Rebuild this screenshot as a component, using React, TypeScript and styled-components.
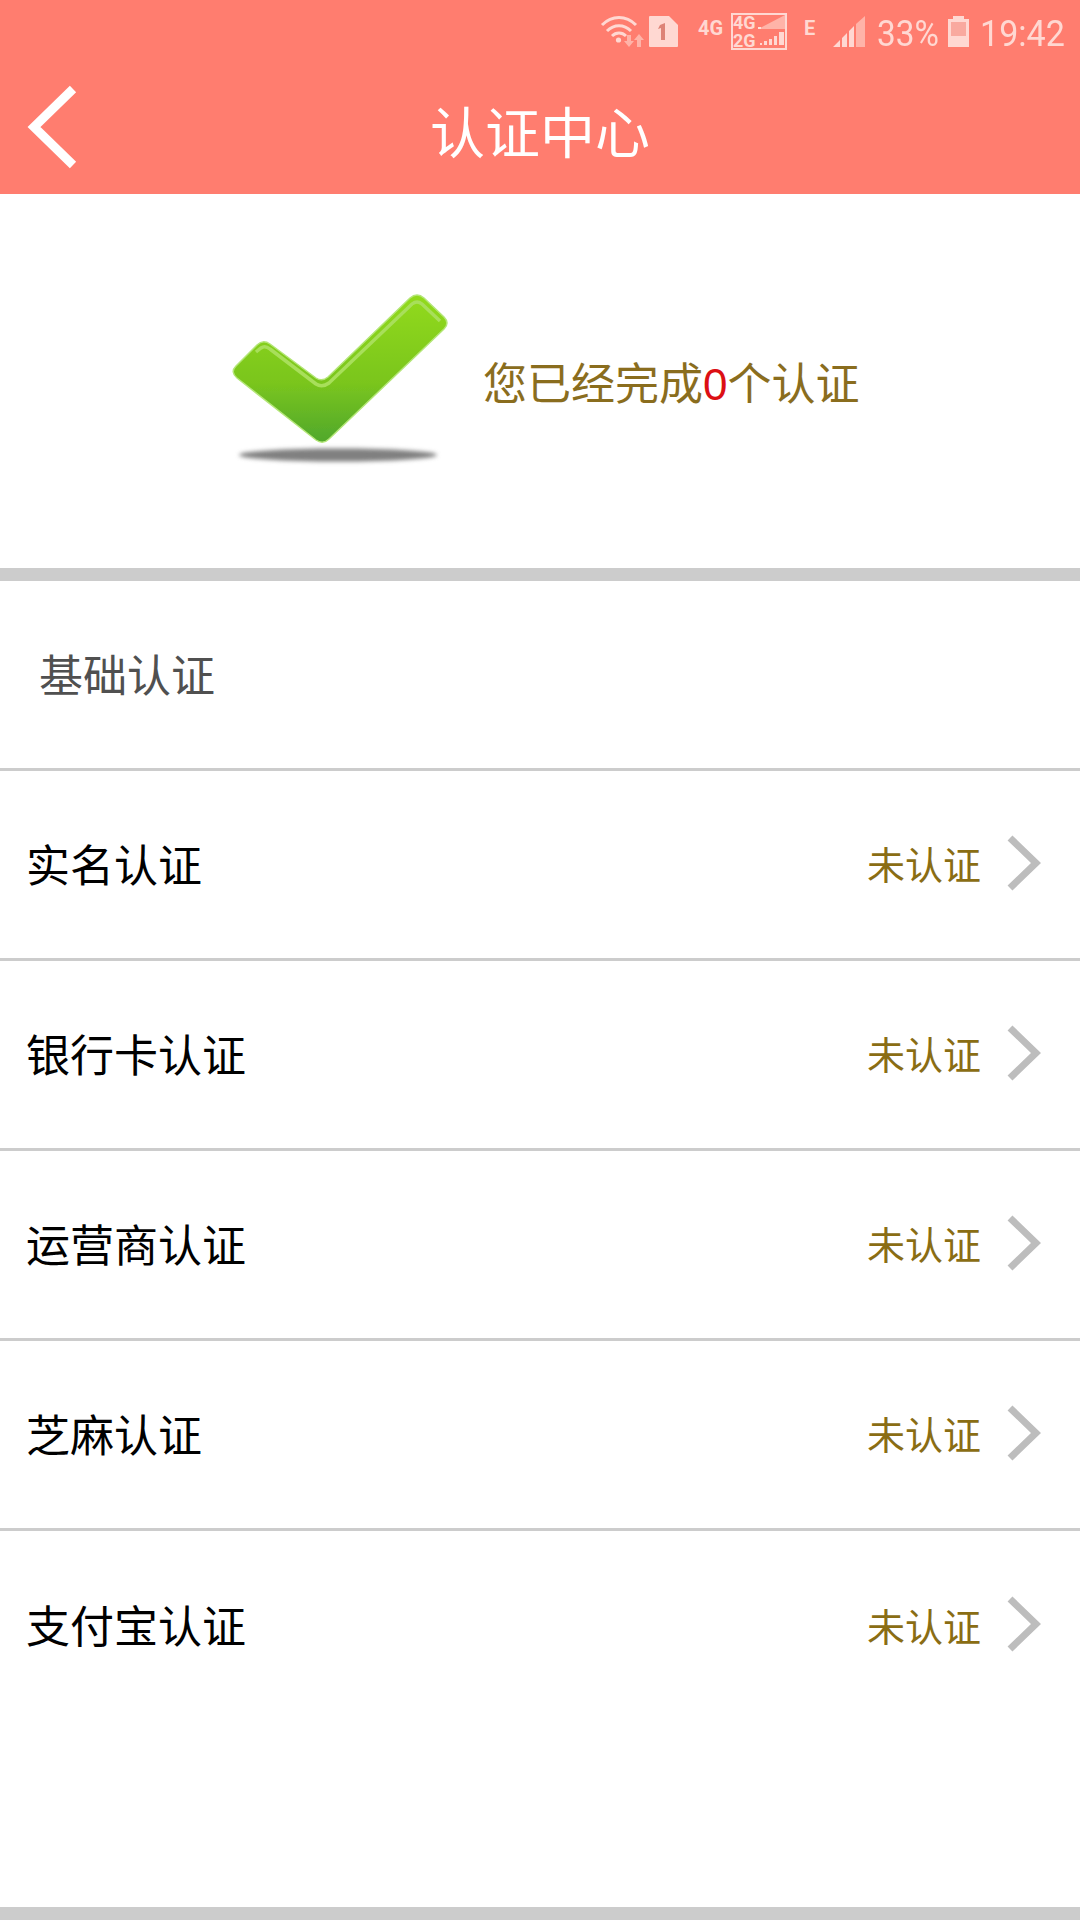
import styled, { createGlobalStyle } from "styled-components"

const GlobalStyle = createGlobalStyle`
  html, body {
    margin: 0;
    padding: 0;
    background: #ffffff;
  }
  * {
    box-sizing: border-box;
  }
`

const Page = styled.div`
  width: 1080px;
  height: 1920px;
  display: flex;
  flex-direction: column;
  background: #ffffff;
  font-family: "Noto Sans CJK SC", "Roboto", sans-serif;
  overflow: hidden;
`

const Header = styled.header`
  height: 194px;
  flex: none;
  background: #ff7d6f;
  display: flex;
  flex-direction: column;
`

const StatusBar = styled.div`
  height: 66px;
  display: flex;
  align-items: center;
  padding: 0 0 3px 600px;
  color: #ffd8d2;
`

const StatusIcon = styled.svg<{ $ml?: number }>`
  display: block;
  flex: none;
  margin-left: ${(p) => p.$ml ?? 0}px;
`

const StatusBadge = styled.span<{ $ml: number; $w: number }>`
  flex: none;
  width: ${(p) => p.$w}px;
  margin: 0 0 7px ${(p) => p.$ml}px;
  font-family: "Roboto", sans-serif;
  font-size: 20px;
  font-weight: 700;
  line-height: 20px;
`

const StatusText = styled.span<{ $ml: number; $w: number; $scale: number }>`
  flex: none;
  width: ${(p) => p.$w}px;
  margin: 5px 0 0 ${(p) => p.$ml}px;
  font-family: "Roboto", sans-serif;
  font-size: 37px;
  line-height: 44px;
  white-space: nowrap;
  transform: scaleX(${(p) => p.$scale});
  transform-origin: left center;
`

const TitleBar = styled.div`
  flex: 1;
  position: relative;
  display: flex;
  align-items: center;
  justify-content: center;
  padding-bottom: 2px;
`

const BackIcon = styled.svg`
  position: absolute;
  left: 27px;
  top: 18px;
`

const Title = styled.h1`
  margin: 0;
  font-size: 55px;
  font-weight: 400;
  line-height: 70px;
  color: #ffffff;
`

const Summary = styled.section`
  height: 374px;
  flex: none;
  display: flex;
  align-items: center;
  padding-left: 228px;
`

const CheckSvg = styled.svg`
  flex: none;
  display: block;
`

const SummaryText = styled.p`
  margin: 3px 0 0 31px;
  font-size: 44px;
  line-height: 60px;
  color: #8a6d1e;
`

const Count = styled.span`
  color: #dc0f14;
  font-family: "Liberation Sans", sans-serif;
`

const Band = styled.div`
  height: 13px;
  flex: none;
  background: #cccccc;
`

const SectionHeader = styled.div`
  height: 190px;
  flex: none;
  display: flex;
  align-items: center;
  padding: 0 0 4px 39px;
  font-size: 44px;
  color: #505050;
  border-bottom: 3px solid #cccccc;
`

const Row = styled.div<{ $last?: boolean }>`
  height: 190px;
  flex: none;
  display: flex;
  align-items: center;
  padding: 0 39px 4px 26px;
  border-bottom: ${(p) => (p.$last ? "none" : "3px solid #cccccc")};
`

const RowLabel = styled.span`
  flex: 1;
  font-size: 44px;
  color: #000000;
`

const RowStatus = styled.span`
  font-size: 38px;
  color: #8a6d14;
  margin-right: 26px;
`

const ChevronSvg = styled.svg`
  flex: none;
  display: block;
`

const Spacer = styled.div`
  flex: 1;
`

function WifiIcon() {
  return (
    <StatusIcon width="44" height="34" viewBox="0 0 44 34" fill="none">
      <path d="M2 10C12 0 26 0 36 10" stroke="#ffd8d2" strokeWidth="3" />
      <path d="M7 16C14 9 24 9 31 16" stroke="#ffd8d2" strokeWidth="3" />
      <path d="M12 21C16 17 22 17 26 21" stroke="#ffd8d2" strokeWidth="3" />
      <circle cx="18.5" cy="25" r="2.6" fill="#ffd8d2" />
      <path d="M27 20h4v6h3l-5 6-5-6h3z" fill="#ffb3a8" />
      <path d="M37 32v-7h-3l5-6 5 6h-3v7z" fill="#ffb3a8" />
    </StatusIcon>
  )
}

function SimIcon() {
  return (
    <StatusIcon $ml={5} width="29" height="31" viewBox="0 0 29 31">
      <path d="M1 0h19l9 9v21a1 1 0 0 1-1 1H1a1 1 0 0 1-1-1V1a1 1 0 0 1 1-1z" fill="#ffd8d2" />
      <path d="M11 9l5-2v17h-4V12l-3 1z" fill="#dd8377" />
    </StatusIcon>
  )
}

function NetworkBox() {
  return (
    <StatusIcon $ml={9} width="56" height="37" viewBox="0 0 56 37">
      <rect x="1" y="1" width="54" height="35" fill="none" stroke="#ffd8d2" strokeWidth="2" />
      <text x="2" y="16" fontSize="18" fontWeight="700" fontFamily="Roboto" fill="#ffd8d2">4G</text>
      <text x="2" y="34" fontSize="18" fontWeight="700" fontFamily="Roboto" fill="#ffd8d2">2G</text>
      <path d="M27 16L54 2v14z" fill="#ffb3a8" />
      <path d="M27 16h3v-2h-3z" fill="#ffe0da" />
      <path d="M29 32h2v-2h-2zM33 32h3v-4h-3zM38 32h3v-6h-3zM43 32h3v-9h-3zM48 32h5V19h-5z" fill="#ffd8d2" />
    </StatusIcon>
  )
}

function SignalIcon() {
  return (
    <StatusIcon $ml={20} width="32" height="31" viewBox="0 0 32 31">
      <path d="M0 31l7-7v7zM9 31V22l5-5v14zM16 31V15l5-5v21z" fill="#ffd8d2" />
      <path d="M23 31V8l9-8v31z" fill="#ffb3a8" />
    </StatusIcon>
  )
}

function BatteryIcon() {
  return (
    <StatusIcon $ml={10} width="21" height="31" viewBox="0 0 21 31">
      <path d="M5 0h11v3h5v28H0V3h5z" fill="#ffd8d2" />
      <rect x="3" y="6" width="15" height="14" fill="#f9a99f" />
    </StatusIcon>
  )
}

function CheckMark() {
  return (
    <CheckSvg width="224" height="186" viewBox="0 0 224 186">
      <defs>
        <linearGradient id="checkFill" x1="0" y1="0" x2="0" y2="1">
          <stop offset="0" stopColor="#92da1a" />
          <stop offset="0.6" stopColor="#7ac51e" />
          <stop offset="1" stopColor="#50a82c" />
        </linearGradient>
        <filter id="soft" x="-10%" y="-10%" width="120%" height="120%">
          <feGaussianBlur stdDeviation="0.7" />
        </filter>
        <filter id="softShadow" x="-10%" y="-60%" width="120%" height="220%">
          <feGaussianBlur stdDeviation="2" />
        </filter>
      </defs>
      <ellipse cx="110" cy="167" rx="99" ry="6.5" fill="#808080" filter="url(#softShadow)" />
      <g filter="url(#soft)">
        <path
          d="M8 78L29 57Q35 51 42 56L88 90Q94 94 100 89L182 10Q189 4 196 10L216 29Q222 35 216 41L101 151Q95 157 88 152L9 90Q2 84 8 78Z"
          fill="url(#checkFill)"
          stroke="#b4e678"
          strokeWidth="1.5"
        />
        <path
          d="M28 64L33 60Q37 57 42 61L88 96Q94 100 101 95L184 16Q189 12 194 16L212 33"
          fill="none"
          stroke="#a8df5a"
          strokeWidth="3.5"
        />
      </g>
    </CheckSvg>
  )
}

function Chevron() {
  return (
    <ChevronSvg width="34" height="56" viewBox="0 0 34 56">
      <path d="M3 3L29 28L3 53" fill="none" stroke="#bdbdbd" strokeWidth="7" />
    </ChevronSvg>
  )
}

const items = ["实名认证", "银行卡认证", "运营商认证", "芝麻认证", "支付宝认证"]

export default function App() {
  return (
    <Page>
      <GlobalStyle />
      <Header>
        <StatusBar>
          <WifiIcon />
          <SimIcon />
          <StatusBadge $ml={20} $w={24}>4G</StatusBadge>
          <NetworkBox />
          <StatusBadge $ml={17} $w={9}>E</StatusBadge>
          <SignalIcon />
          <StatusText $ml={12} $w={61} $scale={0.9}>33%</StatusText>
          <BatteryIcon />
          <StatusText $ml={11} $w={82} $scale={0.92}>19:42</StatusText>
        </StatusBar>
        <TitleBar>
          <BackIcon width="54" height="86" viewBox="0 0 54 86">
            <path d="M46 5L7 43L46 81" fill="none" stroke="#ffffff" strokeWidth="9" />
          </BackIcon>
          <Title>认证中心</Title>
        </TitleBar>
      </Header>
      <Summary>
        <CheckMark />
        <SummaryText>
          您已经完成<Count>0</Count>个认证
        </SummaryText>
      </Summary>
      <Band />
      <SectionHeader>基础认证</SectionHeader>
      {items.map((item, i) => (
        <Row key={item} $last={i === items.length - 1}>
          <RowLabel>{item}</RowLabel>
          <RowStatus>未认证</RowStatus>
          <Chevron />
        </Row>
      ))}
      <Spacer />
      <Band />
    </Page>
  )
}
